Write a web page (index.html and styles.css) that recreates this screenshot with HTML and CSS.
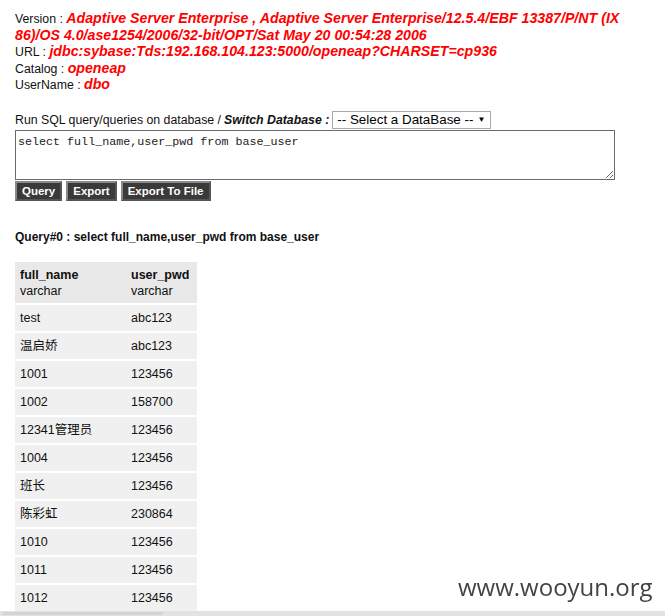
FILE: index.html
```html
<!DOCTYPE html>
<html>
<head>
<meta charset="utf-8">
<link rel="stylesheet" href="styles.css">
</head>
<body>
<div class="page">
  <div class="info">
    <div>Version : <span class="val">Adaptive Server Enterprise , Adaptive Server Enterprise/12.5.4/EBF 13387/P/NT (IX 86)/OS 4.0/ase1254/2006/32-bit/OPT/Sat May 20 00:54:28 2006</span></div>
    <div>URL : <span class="val">jdbc:sybase:Tds:192.168.104.123:5000/openeap?CHARSET=cp936</span></div>
    <div>Catalog : <span class="val">openeap</span></div>
    <div>UserName : <span class="val">dbo</span></div>
  </div>
  <form class="form">
    <div class="runline">Run SQL query/queries on database / <b><i>Switch Database :</i></b>
      <span class="select">-- Select a DataBase -- <span class="arrow">&#9660;</span></span>
    </div>
    <textarea class="sql">select full_name,user_pwd from base_user</textarea>
    <div class="buttons">
      <span class="btn">Query</span><span class="btn">Export</span><span class="btn">Export To File</span>
    </div>
  </form>
  <div class="qtitle">Query#0 : select full_name,user_pwd from base_user</div>
  <table class="result">
    <colgroup><col class="c1"><col class="c2"></colgroup>
    <thead>
      <tr><th><b>full_name</b><br>varchar</th><th><b>user_pwd</b><br>varchar</th></tr>
    </thead>
    <tbody>
      <tr><td>test</td><td>abc123</td></tr>
      <tr><td>温启娇</td><td>abc123</td></tr>
      <tr><td>1001</td><td>123456</td></tr>
      <tr><td>1002</td><td>158700</td></tr>
      <tr><td>12341管理员</td><td>123456</td></tr>
      <tr><td>1004</td><td>123456</td></tr>
      <tr><td>班长</td><td>123456</td></tr>
      <tr><td>陈彩虹</td><td>230864</td></tr>
      <tr><td>1010</td><td>123456</td></tr>
      <tr><td>1011</td><td>123456</td></tr>
      <tr><td>1012</td><td>123456</td></tr>
    </tbody>
  </table>
</div>
<div class="watermark">www.wooyun.org</div>
<div class="hscroll"><div class="thumb"></div></div>
</body>
</html>
```
FILE: styles.css
```css
html, body { margin: 0; padding: 0; background: #fff; overflow: hidden; }
body {
  font-family: "Liberation Sans", Arial, "Noto Sans CJK SC", sans-serif;
  font-size: 12.3px;
  color: #111;
}
.page { padding: 11px 0 0 15px; width: 635px; }
.info { line-height: 16.6px; }
.val { color: #f00; font-weight: bold; font-style: italic; font-size: 14.2px; line-height: 0; }
.form { margin-top: 17px; }
.runline { height: 18px; line-height: 18px; display: flex; align-items: center; white-space: nowrap; }
.runline b { margin-left: 3px; }
.select {
  display: inline-flex; align-items: center; margin-left: 3px; box-sizing: border-box;
  border: 1px solid #a9a9a9; height: 18px; padding: 0 5px 0 4px;
  font-size: 13.4px; color: #000; background: #fff;
}
.arrow { font-size: 8px; margin-left: 4px; }
.sql {
  display: block; box-sizing: border-box; width: 600px; height: 50px;
  margin: 1px 0 0 0; padding: 4px 2px 2px 2px;
  border: 1px solid #6b6b6b; font-family: "Liberation Mono", "Courier New", monospace;
  font-size: 11.7px; color: #222; resize: both;
}
.buttons { display: flex; gap: 4px; margin-top: 1px; }
.btn {
  display: inline-block; background: #3a3a3a; color: #fff; font-weight: bold;
  font-size: 11.5px; height: 16px; line-height: 16px; padding: 0 5px;
  border: 2px solid; border-color: #8a8a8a #555 #555 #8a8a8a;
}
.qtitle { font-weight: bold; font-size: 12px; margin-top: 29px; line-height: 15px; }
.result {
  margin-top: 17px; border-collapse: collapse; width: 182px; table-layout: fixed;
  background: #f0f0f0; font-size: 12.5px;
}
col.c1 { width: 111px; }
col.c2 { width: 71px; }
.result th {
  text-align: left; font-weight: normal; background: #e8e8e8;
  padding: 5px 5px 4px 5px; line-height: 16px; vertical-align: top;
  border-bottom: 2px solid #fff; white-space: nowrap;
}
.result th b { font-weight: bold; }
.result td {
  padding: 0 5px; height: 26px; border-bottom: 2px solid #fff; line-height: 16px; white-space: nowrap;
}
.watermark {
  position: fixed; left: 458px; top: 570px;
  font-family: "Open Sans", "Noto Sans", sans-serif; font-size: 24px; color: #444;
}
.hscroll {
  position: fixed; left: 0; right: 0; bottom: 0; height: 5px; background: #e2e2e2;
}
.hscroll .thumb { margin-left: 3px; width: 160px; height: 3px; margin-top: 1px; background: #d4d4d4; }
```
